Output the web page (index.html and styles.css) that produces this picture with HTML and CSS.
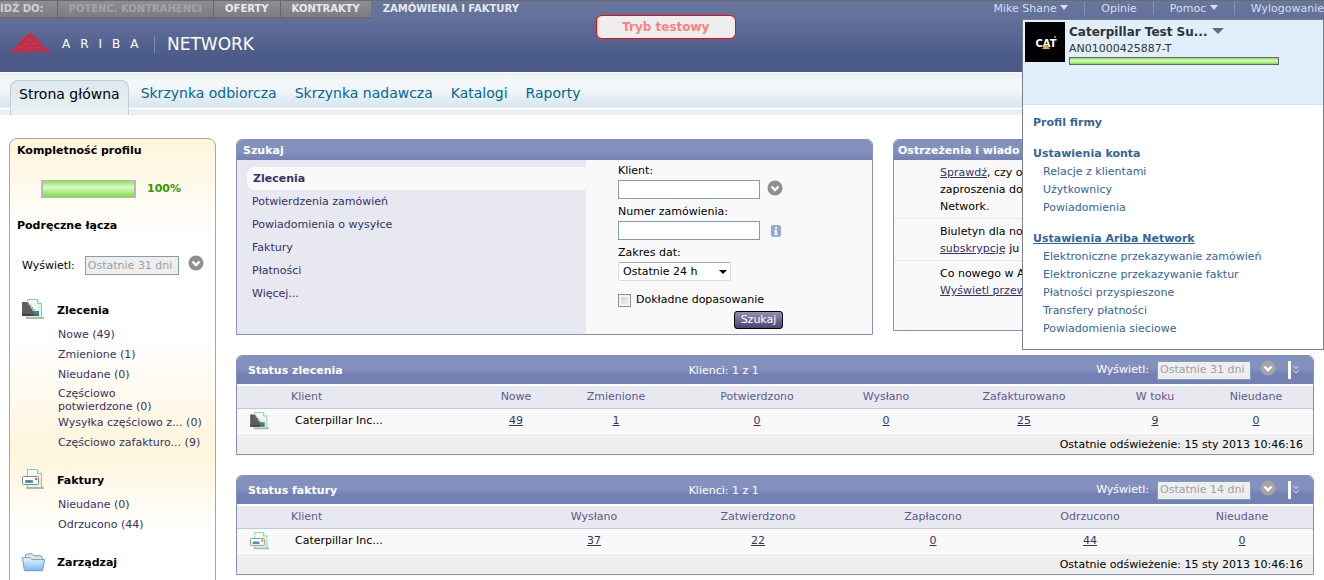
FILE: index.html
```html
<!DOCTYPE html>
<html lang="pl">
<head>
<meta charset="utf-8">
<title>Ariba Network</title>
<link rel="stylesheet" href="styles.css">
</head>
<body>
<svg class="defs" aria-hidden="true">
  <defs>
    <linearGradient id="folder" x1="0" y1="0" x2="0" y2="1"><stop offset="0" stop-color="#eaf6ff"/><stop offset="1" stop-color="#7db9f0"/></linearGradient>
    <linearGradient id="sheet" x1="0" y1="0" x2="1" y2="1"><stop offset="0" stop-color="#fff"/><stop offset="1" stop-color="#d3f1dc"/></linearGradient>
    <symbol id="i-order" viewBox="0 0 23 22">
      <path d="M4 18h18v2H4z" fill="#999" opacity=".7"/>
      <path d="M5.500.5h10l4 4v14h-14z" fill="url(#sheet)" stroke="#84cf9c"/>
      <path d="M15.500.5v4h4" fill="#fff" stroke="#84cf9c"/>
      <path d="M0 3h5l6 9 6 3v2H0z" fill="#5e5e5e"/>
      <path d="M6 4l7 9" stroke="#777" stroke-width="2" stroke-dasharray="1 1" fill="none"/>
      <path d="M12 12h5v3h-5z" fill="#3c87a6"/><path d="M0 15h11v2H0z" fill="#444"/>
    </symbol>
    <symbol id="i-invoice" viewBox="0 0 23 22">
      <path d="M4 18h18v2H4z" fill="#999" opacity=".7"/>
      <path d="M5.500.5h10l4 4v14h-14z" fill="url(#sheet)" stroke="#84cf9c"/>
      <path d="M15.500.5v4h4" fill="#fff" stroke="#84cf9c"/>
      <rect x=".5" y="7.500" width="16" height="8" rx="1" fill="#fff" stroke="#858585"/>
      <rect x="3" y="11" width="8" height="3" rx="1" fill="#4695ba"/><path d="M13 9h2v2h-2z" fill="#f4511e"/>
    </symbol>
    <symbol id="i-down" viewBox="0 0 16 16">
      <circle cx="8" cy="8" r="7.500" fill="currentColor"/><path d="M4.500 6.500L8 10l3.500-3.500" fill="none" stroke="#fff" stroke-width="2.400"/>
    </symbol>
    <symbol id="i-more" viewBox="0 0 6 10">
      <path d="M.5 1L3 3.500 5.500 1M.5 5.500L3 8l2.500-2.500" fill="none" stroke="#dfe6f5" stroke-width="1"/>
    </symbol>
  </defs>
</svg>

<header class="masthead">
  <div class="topbar">
    <nav class="switcher" aria-label="Idź do">
      <span class="switch switch-label">IDŹ DO:</span>
      <span class="switch switch-off">POTENC. KONTRAHENCI</span>
      <a class="switch" href="#">OFERTY</a>
      <a class="switch" href="#">KONTRAKTY</a>
      <a class="switch switch-current" href="#">ZAMÓWIENIA I FAKTURY</a>
    </nav>
    <nav class="utility" aria-label="Konto">
      <a href="#">Mike Shane <span class="caret"></span></a>
      <a href="#">Opinie</a>
      <a href="#">Pomoc <span class="caret"></span></a>
      <a href="#">Wylogowanie</a>
    </nav>
  </div>
  <div class="brand">
    <svg class="brand-mark" viewBox="0 0 42 20" aria-hidden="true">
      <path d="M0 20Q10 10 16 3Q21-3 26 3Q32 10 42 20L38 19Q34 15 31 17L33 20Q26 14 21 18L23 20H19L21 18Q16 14 9 20L11 17Q8 15 4 19z" fill="#ee1c2e"/>
      <g fill="#56658f">
        <path d="M17.500 5.500Q21 3 24.500 5.500Q21 8 17.500 5.500z"/>
        <path d="M13 9.500Q16.500 7 20 9.500Q16.500 12 13 9.500zM22 9.500Q25.500 7 29 9.500Q25.500 12 22 9.500z"/>
        <path d="M8.500 13.500Q12 11.500 15.500 14Q12 16 8.500 13.500zM17.500 14Q21 11.500 24.500 14Q21 16.500 17.500 14zM26.500 14Q30 11.500 33.500 13.500Q30 16 26.500 14z"/>
      </g>
    </svg>
    <span class="brand-ariba">ARIBA</span>
    <span class="brand-network">NETWORK</span>
  </div>
  <div class="test-mode">Tryb testowy</div>
</header>

<nav class="tabs" aria-label="Główna">
  <a class="tab tab-current" href="#">Strona główna</a>
  <a class="tab" href="#">Skrzynka odbiorcza</a>
  <a class="tab" href="#">Skrzynka nadawcza</a>
  <a class="tab" href="#">Katalogi</a>
  <a class="tab" href="#">Raporty</a>
</nav>

<div class="layout">
  <aside class="sidebar">
    <h2 class="side-title">Kompletność profilu</h2>
    <div class="completeness"><span class="meter"></span><strong>100%</strong></div>
    <h2 class="side-title">Podręczne łącza</h2>
    <div class="period">
      <label for="p-side">Wyświetl:</label>
      <input id="p-side" class="period-box" value="Ostatnie 31 dni" disabled>
      <button class="round" aria-label="Zmień okres"><svg viewBox="0 0 16 16"><use href="#i-down"/></svg></button>
    </div>
    <section class="quick quick-first">
      <svg class="quick-icon" viewBox="0 0 23 22"><use href="#i-order"/></svg>
      <div class="quick-body">
        <h3>Zlecenia</h3>
        <a href="#">Nowe (49)</a>
        <a href="#">Zmienione (1)</a>
        <a href="#">Nieudane (0)</a>
        <a class="two-line" href="#">Częściowo<br>potwierdzone (0)</a>
        <a href="#">Wysyłka częściowo z... (0)</a>
        <a href="#">Częściowo zafakturo... (9)</a>
      </div>
    </section>
    <section class="quick quick-cream">
      <svg class="quick-icon" viewBox="0 0 23 22"><use href="#i-invoice"/></svg>
      <div class="quick-body">
        <h3>Faktury</h3>
        <a href="#">Nieudane (0)</a>
        <a href="#">Odrzucono (44)</a>
      </div>
    </section>
    <section class="quick">
      <svg class="quick-icon" viewBox="0 0 24 20">
        <path d="M3.500 6V2.500l2-1h5l2 2h7l1.500 1.500V8h-17z" fill="#e4e4e4" stroke="#8b8b8b"/>
        <path d="M.5 5.500h8l2 2h13l-2 11.500h-19z" fill="url(#folder)" stroke="#6b9cc9"/>
      </svg>
      <div class="quick-body">
        <h3>Zarządzaj</h3>
        <a href="#">Pulpit nawigacji</a>
      </div>
    </section>
  </aside>

  <main class="main">
    <div class="upper">
      <section class="card search">
        <h2 class="card-title">Szukaj</h2>
        <div class="search-body">
          <nav class="search-kinds" aria-label="Rodzaj dokumentu">
            <a class="kind kind-current" href="#">Zlecenia</a>
            <a class="kind" href="#">Potwierdzenia zamówień</a>
            <a class="kind" href="#">Powiadomienia o wysyłce</a>
            <a class="kind" href="#">Faktury</a>
            <a class="kind" href="#">Płatności</a>
            <a class="kind" href="#">Więcej...</a>
          </nav>
          <form class="search-form">
            <label for="client">Klient:</label>
            <div class="line"><input id="client" class="text" type="text"><button type="button" class="round" aria-label="Wybierz klienta"><svg viewBox="0 0 16 16"><use href="#i-down"/></svg></button></div>
            <label for="number">Numer zamówienia:</label>
            <div class="line"><input id="number" class="text" type="text"><span class="info"><svg viewBox="0 0 10 12"><rect width="10" height="12" rx="2" fill="#93abcd"/><path d="M4 2h2v2H4zM3 5h3v4h1v1H3V9h1V6H3z" fill="#fff"/></svg></span></div>
            <label for="range">Zakres dat:</label>
            <div class="range-wrap"><select id="range" class="range"><option>Ostatnie 24 h</option></select></div>
            <div class="exact"><input type="checkbox" id="exact"><label for="exact">Dokładne dopasowanie</label></div>
            <button type="button" class="submit">Szukaj</button>
          </form>
        </div>
      </section>

      <section class="card alerts">
        <h2 class="card-title">Ostrzeżenia i wiado</h2>
        <p><a href="#">Sprawdź</a>, czy o<br>zaproszenia do<br>Network.</p>
        <p>Biuletyn dla no<br><a href="#">subskrypcję</a> ju</p>
        <p>Co nowego w A<br><a href="#">Wyświetl przew</a></p>
      </section>
    </div>

    <section class="card status">
      <div class="status-head">
        <h2>Status zlecenia</h2>
        <span>Klienci: 1 z 1</span>
        <div class="period">
          <label for="p-orders">Wyświetl:</label>
          <input id="p-orders" class="period-box" value="Ostatnie 31 dni" disabled>
          <button class="round" aria-label="Zmień okres"><svg viewBox="0 0 16 16"><use href="#i-down"/></svg></button>
          <button class="more" aria-label="Zwiń"><svg viewBox="0 0 6 10"><use href="#i-more"/></svg></button>
        </div>
      </div>
      <table>
        <colgroup><col class="w54"><col class="w188"><col class="w74"><col class="w126"><col class="w156"><col class="w102"><col class="w174"><col class="w88"><col class="w114"></colgroup>
        <thead><tr><th></th><th class="name">Klient</th><th>Nowe</th><th>Zmienione</th><th>Potwierdzono</th><th>Wysłano</th><th>Zafakturowano</th><th>W toku</th><th>Nieudane</th></tr></thead>
        <tbody><tr><td class="icon"><svg viewBox="0 0 23 22"><use href="#i-order"/></svg></td><td class="client">Caterpillar Inc...</td><td><a href="#">49</a></td><td><a href="#">1</a></td><td><a href="#">0</a></td><td><a href="#">0</a></td><td><a href="#">25</a></td><td><a href="#">9</a></td><td><a href="#">0</a></td></tr></tbody>
      </table>
      <div class="refreshed">Ostatnie odświeżenie: 15 sty 2013 10:46:16</div>
    </section>

    <section class="card status">
      <div class="status-head">
        <h2>Status faktury</h2>
        <span>Klienci: 1 z 1</span>
        <div class="period">
          <label for="p-invoices">Wyświetl:</label>
          <input id="p-invoices" class="period-box" value="Ostatnie 14 dni" disabled>
          <button class="round" aria-label="Zmień okres"><svg viewBox="0 0 16 16"><use href="#i-down"/></svg></button>
          <button class="more" aria-label="Zwiń"><svg viewBox="0 0 6 10"><use href="#i-more"/></svg></button>
        </div>
      </div>
      <table>
        <colgroup><col class="w54"><col class="w238"><col class="w130"><col class="w198"><col class="w152"><col class="w162"><col class="w142"></colgroup>
        <thead><tr><th></th><th class="name">Klient</th><th>Wysłano</th><th>Zatwierdzono</th><th>Zapłacono</th><th>Odrzucono</th><th>Nieudane</th></tr></thead>
        <tbody><tr><td class="icon"><svg viewBox="0 0 23 22"><use href="#i-invoice"/></svg></td><td class="client">Caterpillar Inc...</td><td><a href="#">37</a></td><td><a href="#">22</a></td><td><a href="#">0</a></td><td><a href="#">44</a></td><td><a href="#">0</a></td></tr></tbody>
      </table>
      <div class="refreshed">Ostatnie odświeżenie: 15 sty 2013 10:46:16</div>
    </section>
  </main>
</div>

<div class="account">
  <div class="account-head">
    <svg class="account-logo" viewBox="0 0 40 40" role="img" aria-label="CAT">
      <rect width="40" height="40" fill="#000"/>
      <text x="21" y="25" class="cat">CAT</text>
      <path d="M17 27l4-5 4 5z" fill="#f9a61a"/>
      <circle cx="30" cy="15" r="1" fill="#aaa"/>
    </svg>
    <div class="account-info">
      <strong>Caterpillar Test Su... <span class="caret caret-dark"></span></strong>
      <span>AN01000425887-T</span>
      <span class="account-meter"></span>
    </div>
  </div>
  <nav class="account-menu" aria-label="Ustawienia">
    <a class="group" href="#">Profil firmy</a>
    <a class="group" href="#">Ustawienia konta</a>
    <a class="item" href="#">Relacje z klientami</a>
    <a class="item" href="#">Użytkownicy</a>
    <a class="item" href="#">Powiadomienia</a>
    <a class="group hover" href="#">Ustawienia Ariba Network</a>
    <a class="item" href="#">Elektroniczne przekazywanie zamówień</a>
    <a class="item" href="#">Elektroniczne przekazywanie faktur</a>
    <a class="item" href="#">Płatności przyspieszone</a>
    <a class="item" href="#">Transfery płatności</a>
    <a class="item" href="#">Powiadomienia sieciowe</a>
  </nav>
</div>
</body>
</html>
```
FILE: styles.css
```css
* { box-sizing: border-box; }
html, body { height: 100%; }
body {
  margin: 0;
  position: relative;
  overflow: hidden;
  background: #fff;
  color: #000;
  font: 11px/18px Verdana, "DejaVu Sans", sans-serif;
}
h2, h3, p { margin: 0; font-size: 11px; }
a { color: #333366; }
button { padding: 0; border: 0; background: none; font: inherit; }
input, select { font: inherit; margin: 0; }
svg { display: block; }
.defs { position: absolute; width: 0; height: 0; }

/* Masthead */
.masthead {
  position: relative;
  height: 72px;
  border-top: 1px solid #6b6b6b;
  background: linear-gradient(#69779c, #62719a 25%, #4b5b89 80%, #4a5986);
}
.topbar { display: flex; justify-content: space-between; }
.switcher { display: flex; height: 18px; }
.switch {
  padding: 0 11px;
  border-bottom: 2px solid #6a6a6e;
  border-left: 1px solid #66666a;
  background: linear-gradient(#8e8e92, #7c7c80);
  color: #e8e8ec;
  font-weight: bold;
  font-size: 10px;
  line-height: 15px;
  text-decoration: none;
  white-space: nowrap;
}
.switch-label { padding-left: 0; padding-right: 13px; border-left: 0; color: #d0d0d4; }
.switch-off { color: #a3a3a7; }
.switch-current { border-color: transparent; background: none; }
.utility { display: flex; }
.utility a {
  height: 13px;
  margin-top: 1px;
  padding: 0 16px;
  border-left: 1px solid #8290b4;
  color: #d5deef;
  line-height: 13px;
  text-decoration: none;
  white-space: nowrap;
}
.utility a:first-child { border: 0; }
.utility a:last-child { padding-right: 0; }
.caret {
  display: inline-block;
  border: 4px solid transparent;
  border-top: 5px solid #d5deef;
  border-bottom: 0;
  vertical-align: 2px;
}
.caret-dark { border-width: 6px 6px 0; border-top-color: #6a6a6a; }
.brand {
  display: flex;
  align-items: center;
  padding: 14px 0 0 9px;
  color: #fff;
  font-family: "DejaVu Sans", sans-serif;
  line-height: 22px;
}
.brand-mark { width: 42px; height: 20px; }
.brand-ariba { width: 103px; padding-left: 11px; font-size: 12px; letter-spacing: 10px; }
.brand-network {
  height: 18px;
  padding-left: 12px;
  border-left: 1px solid #7d8bb0;
  font-size: 17px;
  line-height: 18px;
}
.test-mode {
  position: absolute;
  top: 14px;
  left: 45%;
  width: 140px;
  height: 24px;
  border: 1px solid #f00;
  border-radius: 6px;
  background: #eee;
  color: #ff8080;
  font-weight: bold;
  font-size: 12px;
  line-height: 23px;
  text-align: center;
}

/* Tabs */
.tabs {
  display: flex;
  align-items: flex-end;
  height: 43px;
  padding-left: 10px;
  border-top: 1px solid #fff;
  background: linear-gradient(#ecf1f5, #f4f8fb 8px, #f0f5f8 18px, #d8e5ee 34px, #fff 35px, #fff 36px, #e8eef0 37px, #eef2f4);
}
.tab {
  height: 35px;
  padding: 0 9px;
  color: #00679a;
  font-size: 14px;
  line-height: 26px;
  text-decoration: none;
}
.tab-current {
  margin-right: 3px;
  padding: 0 8px;
  border: 1px solid #c2ced6;
  border-bottom: 0;
  border-radius: 8px 8px 0 0;
  background: linear-gradient(#dce9f0, #e8f1f3);
  color: #000;
}

/* Page columns */
.layout { display: flex; align-items: flex-start; gap: 20px; padding: 23px 10px 0 9px; }
.sidebar {
  flex: 0 0 207px;
  min-width: 0;
  border: 1px solid #a6a6a6;
  border-radius: 8px;
  background: linear-gradient(#fff5dc, #fff 100px);
}
.main { flex: 1; min-width: 0; display: grid; gap: 20px; padding-top: 1px; }

.side-title { padding: 3px 7px 0; }
.completeness {
  display: flex;
  align-items: center;
  gap: 11px;
  height: 54px;
  padding: 3px 0 0 31px;
  color: #339900;
}
.completeness strong { font-size: 11px; }
.meter {
  width: 95px;
  height: 18px;
  border: 1px solid #b8b8b8;
  border-width: 1px 2px;
  background: linear-gradient(#8de05c, #d8fcc4 40%, #c0f3a4 55%, #7fdc48);
}
.period { display: flex; align-items: center; }
.sidebar .period { padding: 20px 0 0 12px; }
.period-box {
  width: 94px;
  height: 19px;
  padding: 0 2px;
  border: 1px solid #7f9db9;
  background: #eee;
  color: #a0a0a0;
}
.period label { margin-right: 8px; }
.sidebar .period label { margin-right: 10px; }
.round { width: 16px; height: 16px; margin: 0 0 5px 9px; color: #8f8f8f; }
.round svg { width: 16px; height: 16px; }

.quick { display: flex; padding: 16px 0 0 12px; }
.quick-first { padding-top: 23px; background: linear-gradient(#fff0 60px, #fff5dc); }
.quick-icon { flex: none; width: 23px; height: 22px; }
.quick-body { display: flex; flex-direction: column; padding: 3px 0 0 12px; }
.quick-body h3 { margin-bottom: 5px; line-height: 18px; }
.quick-body a { padding-left: 1px; line-height: 20px; text-decoration: none; white-space: nowrap; }
.quick-body .two-line { padding-top: 2px; line-height: 13px; }
.quick-cream { background: linear-gradient(#fff5dc, #fff); }

/* Cards */
.card { border: 1px solid #8490bd; border-radius: 6px 6px 0 0; background: #f9f9f9; overflow: hidden; }
.card-title {
  height: 20px;
  padding: 0 4px 0 6px;
  background: linear-gradient(#8490bd 60%, #7280b4);
  color: #fff;
  line-height: 22px;
}
.upper { display: grid; grid-template-columns: 637fr 421fr; gap: 20px; align-items: start; }
.search-body { display: grid; grid-template-columns: 349fr 286fr; height: 174px; }
.search-kinds { display: flex; flex-direction: column; padding-top: 7px; background: #e8e8f1; }
.kind { padding-left: 15px; line-height: 23px; text-decoration: none; }
.kind-current { margin-left: 10px; padding-left: 6px; border-radius: 8px 0 0 8px; background: #f9f9f9; font-weight: bold; }
.search-form { display: flex; flex-direction: column; align-items: flex-start; padding: 2px 0 0 32px; }
.line { display: flex; height: 23px; }
.text { width: 142px; height: 19px; border: 1px solid #7f9db9; background: #fff; }
.line .round { margin: 0 0 0 7px; }
.info { padding: 4px 0 0 11px; }
.info svg { width: 10px; height: 12px; }
.range-wrap { position: relative; width: 113px; height: 19px; }
.range-wrap::after {
  content: "";
  position: absolute;
  top: 8px;
  right: 4px;
  border: 4px solid transparent;
  border-top-color: #000;
  border-bottom: 0;
  pointer-events: none;
}
.range {
  display: block;
  width: 100%;
  height: 19px;
  padding: 0 0 0 4px;
  appearance: none;
  border: 1px solid #ddd;
  border-top-color: #aaa;
  border-radius: 2px;
  background: #fff;
  color: #000;
}
.exact { display: flex; align-items: center; gap: 5px; margin-top: 10px; }
.exact input {
  width: 13px;
  height: 13px;
  appearance: none;
  border: 1px solid #8e8f8f;
  background: linear-gradient(135deg, #c8ccd2, #f6f6f6);
  box-shadow: inset 0 0 0 2px #f4f4f4;
}
.submit {
  width: 49px;
  height: 18px;
  margin: 2px 0 0 116px;
  border: 1px solid #000;
  border-radius: 3px;
  background: linear-gradient(#958fb4, #4a4270);
  color: #fff;
  line-height: 16px;
}

.alerts { height: 192px; }
.alerts .card-title { padding-left: 4px; white-space: nowrap; }
.alerts p { padding: 4px 0 3px 46px; border-bottom: 1px solid #dfe7ef; line-height: 17px; white-space: nowrap; }
.alerts p:last-child { border: 0; }

/* Status tables */
.status-head {
  display: grid;
  grid-template-columns: 41% 1fr auto;
  column-gap: 4px;
  align-items: center;
  height: 30px;
  padding-left: 11px;
  border-bottom: 2px solid #fff;
  background: linear-gradient(#8490bd 45%, #7280b4 65%);
  color: #fff;
  line-height: 20px;
}
.status-head h2, .status-head > span { padding-top: 2px; }
.status-head .period { padding-right: 14px; }
.status-head .round { color: #a6a6a6; }
.more { display: flex; align-items: center; height: 18px; margin-left: 12px; padding-left: 2px; border-left: 3px solid #fff; }
.more svg { width: 6px; height: 10px; }
table { width: 100%; table-layout: fixed; border-collapse: collapse; }
th, td { padding: 1px 0 0; text-align: center; }
th { height: 22px; border-bottom: 1px solid #c6c5da; background: #e8e8f1; color: #5d5a8c; font-weight: normal; }
td { height: 25px; }
th.name { text-align: left; }
td.client { padding-left: 4px; text-align: left; }
.icon svg { width: 20px; height: 19px; margin-left: 13px; }
.refreshed { height: 21px; padding-right: 10px; border-top: 1px solid #fff; background: #eee; line-height: 22px; text-align: right; }
.w54 { width: 54px; }
.w74 { width: 74px; }
.w88 { width: 88px; }
.w102 { width: 102px; }
.w114 { width: 114px; }
.w126 { width: 126px; }
.w130 { width: 130px; }
.w142 { width: 142px; }
.w152 { width: 152px; }
.w156 { width: 156px; }
.w162 { width: 162px; }
.w174 { width: 174px; }
.w188 { width: 188px; }
.w198 { width: 198px; }
.w238 { width: 238px; }

/* Account menu */
.account {
  position: absolute;
  top: 19px;
  right: 0;
  width: 302px;
  border: 1px solid #7b8088;
  background: #fff;
}
.account-head { display: flex; gap: 4px; height: 85px; padding: 2px; border-bottom: 1px solid #d3e0ea; background: #e1eefb; }
.account-logo { width: 40px; height: 40px; }
.cat { fill: #fff; font: bold 11px "Liberation Sans Narrow", "DejaVu Sans Condensed", sans-serif; text-anchor: middle; }
.account-info { display: flex; flex-direction: column; color: #333; }
.account-info strong { font-size: 12px; line-height: 20px; white-space: nowrap; }
.account-info span { line-height: 14px; }
.account-info .account-meter { width: 210px; height: 8px; margin-top: 1px; border: 1px solid #666; background: linear-gradient(#8de05c, #d8fcc4 50%, #7fdc48); }
.account-menu { display: flex; flex-direction: column; padding: 9px 10px 11px; }
.account-menu a { color: #33669a; text-decoration: none; line-height: 18px; }
.account-menu .group { margin-bottom: 13px; font-weight: bold; }
.account-menu .item { padding-left: 10px; }
.account-menu .group:nth-child(2) { margin-bottom: 0; }
.account-menu .hover { margin: 13px 0 0; text-decoration: underline; }
```
